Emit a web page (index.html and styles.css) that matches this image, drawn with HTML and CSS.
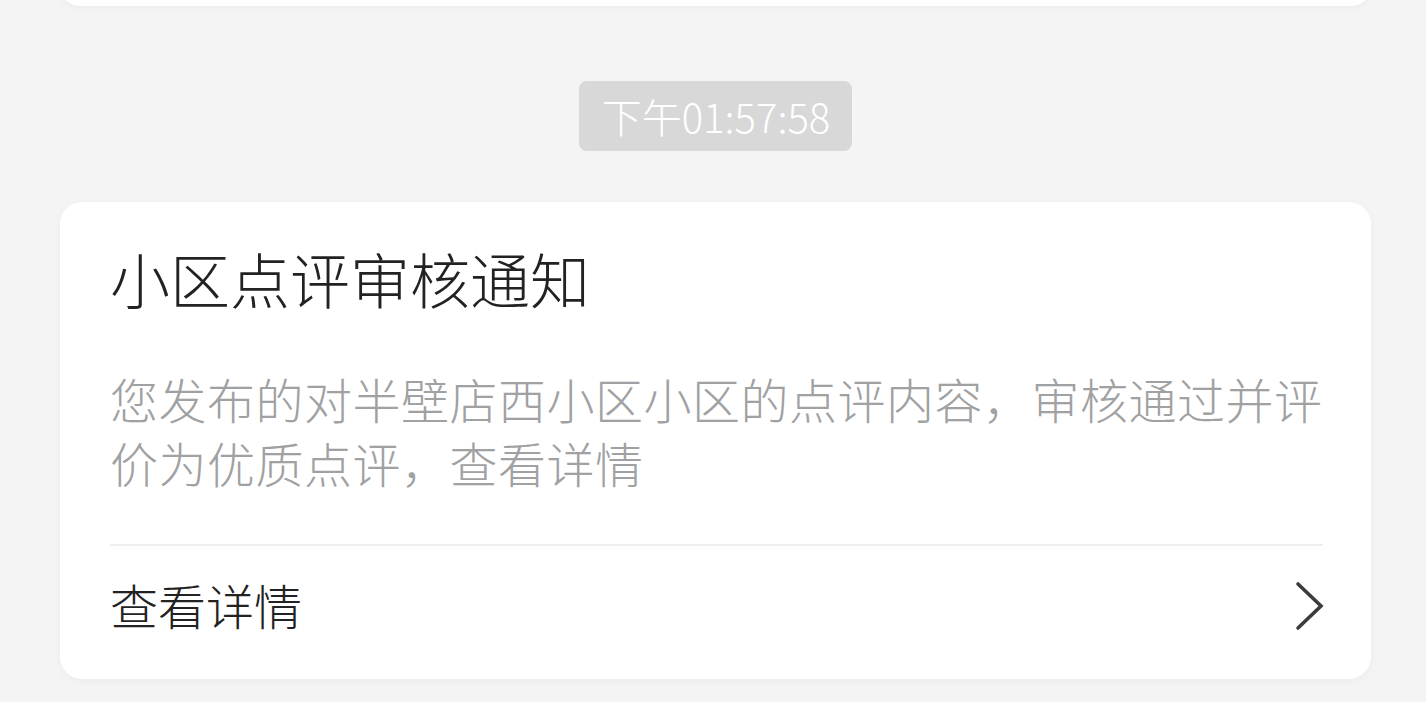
FILE: index.html
```html
<!DOCTYPE html>
<html lang="zh-CN">
<head>
<meta charset="utf-8">
<title>通知</title>
<link rel="stylesheet" href="styles.css">
</head>
<body>
<div class="page">
  <div class="card card-prev"></div>
  <div class="time-row"><span class="time">下午01:57:58</span></div>
  <div class="card notice">
    <div class="title">小区点评审核通知</div>
    <div class="desc">您发布的对半壁店西小区小区的点评内容，审核通过并评价为优质点评，查看详情</div>
    <div class="link-row">
      <span class="link-text">查看详情</span>
      <svg class="chev" width="30" height="50" viewBox="0 0 30 50"><path d="M3 3 L26 25 L3 47" fill="none" stroke="#3a3d3f" stroke-width="3.6" stroke-linecap="round" stroke-linejoin="miter"/></svg>
    </div>
  </div>
</div>
</body>
</html>
```
FILE: styles.css
```css
html, body {
  margin: 0;
  padding: 0;
  background: #f4f4f4;
  font-family: "PingFang SC", "Noto Sans CJK SC", "Noto Sans", sans-serif;
  font-weight: 300;
}
.page {
  padding: 0 55px 0 60px;
  overflow: hidden;
  height: 702px;
  box-sizing: border-box;
}
.card {
  background: #fff;
  border-radius: 22px;
  box-shadow: 0 2px 8px rgba(0,0,0,0.04);
}
.card-prev {
  height: 40px;
  margin-top: -34px;
}
.time-row {
  display: flex;
  justify-content: center;
  margin-top: 75px;
}
.time {
  display: block;
  background: #d8d8d8;
  color: #fff;
  font-size: 40px;
  line-height: 70px;
  height: 70px;
  padding: 0 22px 0 23px;
  border-radius: 8px;
}
.notice {
  margin-top: 51px;
  padding: 34px 48px 0 50px;
}
.title {
  font-size: 60px;
  line-height: 84px;
  color: #222;
}
.desc {
  margin-top: 46px;
  font-size: 48px;
  line-height: 64px;
  letter-spacing: 0.5px;
  color: #a0a1a2;
  padding-bottom: 50px;
  border-bottom: 2px solid #eeeeee;
}
.link-row {
  display: flex;
  align-items: center;
  justify-content: space-between;
  height: 133px;
  box-sizing: border-box;
  padding-bottom: 18px;
  color: #222;
  font-size: 48px;
}
.chev {
  margin-right: -2px;
  margin-top: 4px;
}
```
